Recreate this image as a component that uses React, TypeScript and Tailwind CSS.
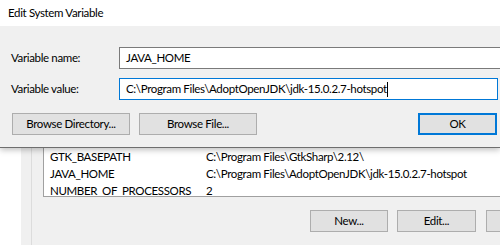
import React from 'react';

const font = { fontFamily: 'Lato, "Noto Sans", sans-serif' };

const rows = [
  { name: 'GTK_BASEPATH', value: 'C:\\Program Files\\GtkSharp\\2.12\\' },
  { name: 'JAVA_HOME', value: 'C:\\Program Files\\AdoptOpenJDK\\jdk-15.0.2.7-hotspot' },
  { name: 'NUMBER_OF_PROCESSORS', value: '2' },
];

function WinButton({ label, className = '', primary = false }: { label: string; className?: string; primary?: boolean }) {
  return (
    <div
      className={`h-[22px] shrink-0 flex items-center justify-center bg-[#e1e1e1] ${
        primary ? 'border-2 border-[#0078d7]' : 'border border-[#adadad]'
      } ${className}`}
    >
      {label}
    </div>
  );
}

export default function App() {
  return (
    <div
      className="w-[500px] h-[245px] overflow-hidden bg-white text-black text-[11.5px] tracking-[-0.35px]"
      style={font}
    >
      {/* Dialog */}
      <div className="relative z-10 shadow-[0_2px_6px_rgba(0,0,0,0.25)]">
        <div className="h-[26px] bg-white flex items-center pl-[8px]">Edit System Variable</div>
        <div className="h-[122px] bg-[#f0f0f0] border-b border-[#6e6e6e] flex flex-col">
          <div className="mt-[21px] flex items-center h-[22px]">
            <div className="w-[119px] shrink-0 pl-[11px]">Variable name:</div>
            <div className="flex-1 h-[22px] bg-white border border-r-0 border-[#7a7a7a] flex items-center pl-[6px]">
              JAVA_HOME
            </div>
          </div>
          <div className="mt-[9px] flex items-center h-[22px] pr-[2px]">
            <div className="w-[119px] shrink-0 pl-[11px]">Variable value:</div>
            <div className="flex-1 h-[22px] bg-white border border-[#0078d7] flex items-center pl-[6px]">
              C:\Program Files\AdoptOpenJDK\jdk-15.0.2.7-hotspot
              <span className="inline-block w-px h-[15px] bg-black" />
            </div>
          </div>
          <div className="mt-[13px] flex items-center pl-[12px] pr-[3px]">
            <WinButton label="Browse Directory..." className="w-[118px]" />
            <WinButton label="Browse File..." className="w-[118px] ml-[9px]" />
            <div className="flex-1" />
            <WinButton label="OK" className="w-[79px]" primary />
          </div>
        </div>
      </div>

      {/* Background window */}
      <div className="flex h-[97px]">
        <div className="w-[21px] shrink-0 bg-white" />
        <div className="flex-1 min-w-0 bg-[#f0f0f0] flex">
          <div className="w-[10px] shrink-0" />
          <div className="flex-1 min-w-0 border-l border-[#dcdcdc] flex flex-col">
            <div className="ml-[11px] h-[49px] bg-white border-l border-b border-[#a0a0a0] overflow-hidden">
              {rows.map((r) => (
                <div key={r.name} className="h-[17px] flex items-center whitespace-nowrap">
                  <div className="w-[162px] shrink-0 pl-[6px]">{r.name}</div>
                  <div>{r.value}</div>
                </div>
              ))}
            </div>
            <div className="mt-[13px] flex pl-[278px]">
              <WinButton label="New..." className="w-[78px]" />
              <WinButton label="Edit..." className="w-[79px] ml-[9px]" />
              <WinButton label="" className="w-[78px] ml-[10px]" />
            </div>
          </div>
        </div>
      </div>
    </div>
  );
}
